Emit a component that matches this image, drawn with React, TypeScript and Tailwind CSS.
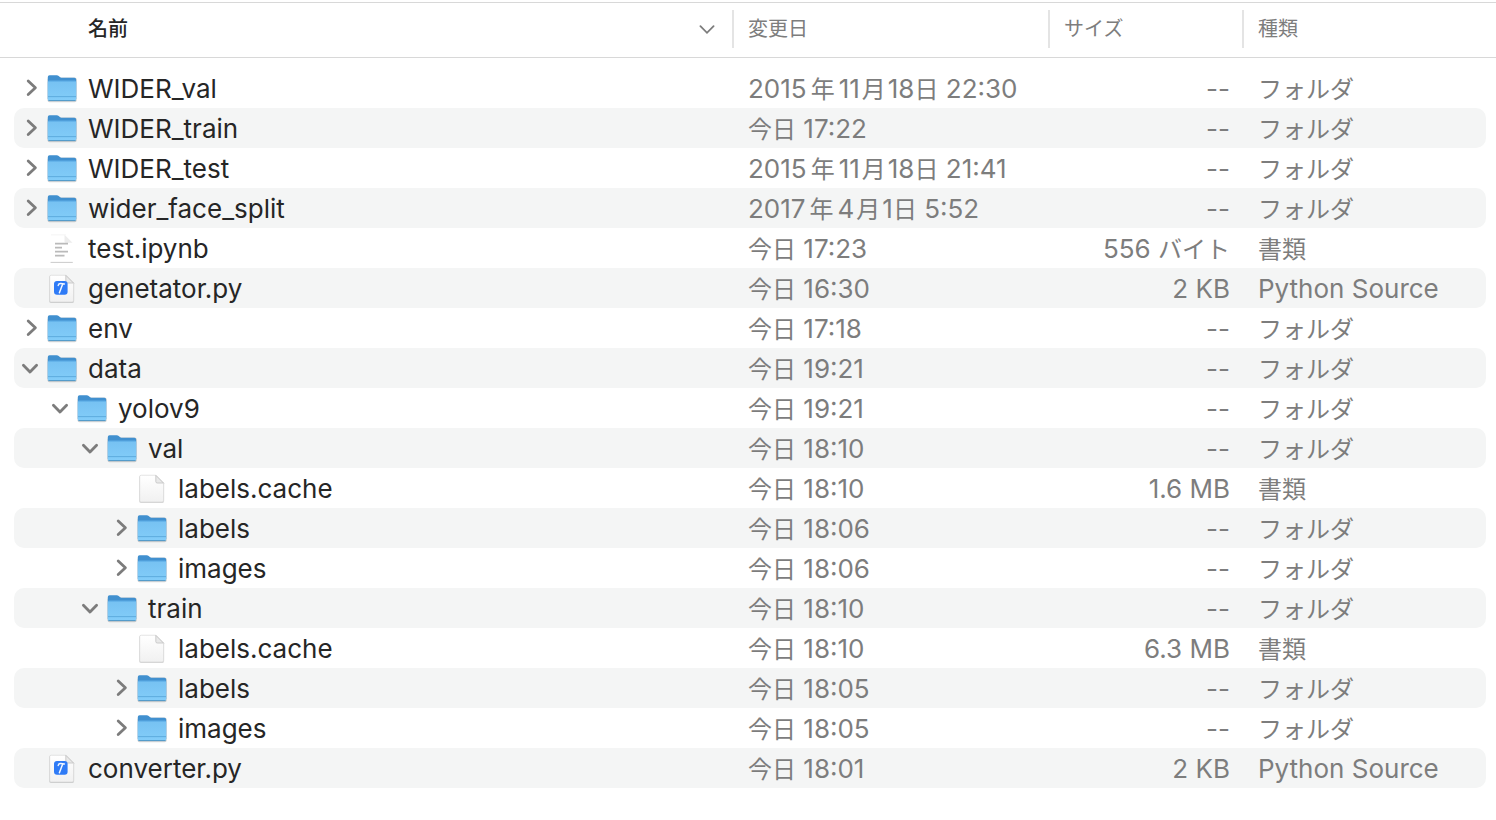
import { Fragment, useState } from "react";

type Kind = "folder" | "text" | "python" | "blank";

type Entry = {
  id: string;
  name: string;
  icon: Kind;
  date: string;
  size: string;
  type: string;
  children?: Entry[];
};

const folder = (id: string, name: string, date: string, children: Entry[] = []): Entry => ({
  id,
  name,
  icon: "folder",
  date,
  size: "--",
  type: "フォルダ",
  children,
});

const file = (id: string, name: string, icon: Kind, date: string, size: string, type: string): Entry => ({
  id,
  name,
  icon,
  date,
  size,
  type,
});

const entries: Entry[] = [
  folder("wval", "WIDER_val", "2015年11月18日 22:30"),
  folder("wtrain", "WIDER_train", "今日 17:22"),
  folder("wtest", "WIDER_test", "2015年11月18日 21:41"),
  folder("split", "wider_face_split", "2017年4月1日 5:52"),
  file("test", "test.ipynb", "text", "今日 17:23", "556 バイト", "書類"),
  file("gen", "genetator.py", "python", "今日 16:30", "2 KB", "Python Source"),
  folder("env", "env", "今日 17:18"),
  folder("data", "data", "今日 19:21", [
    folder("yolo", "yolov9", "今日 19:21", [
      folder("val", "val", "今日 18:10", [
        file("vcache", "labels.cache", "blank", "今日 18:10", "1.6 MB", "書類"),
        folder("vlabels", "labels", "今日 18:06"),
        folder("vimages", "images", "今日 18:06"),
      ]),
      folder("train", "train", "今日 18:10", [
        file("tcache", "labels.cache", "blank", "今日 18:10", "6.3 MB", "書類"),
        folder("tlabels", "labels", "今日 18:05"),
        folder("timages", "images", "今日 18:05"),
      ]),
    ]),
  ]),
  file("conv", "converter.py", "python", "今日 18:01", "2 KB", "Python Source"),
];

const indents = ["pl-0", "pl-[30px]", "pl-[60px]", "pl-[90px]"];

function FolderIcon() {
  return (
    <svg width="30" height="32" viewBox="0 -1 30 32" aria-hidden="true" className="block shrink-0">
      <defs>
        <linearGradient id="folderFront" x1="0" y1="0" x2="0" y2="1">
          <stop offset="0" stopColor="#76c1f2" />
          <stop offset="1" stopColor="#83cdf9" />
        </linearGradient>
      </defs>
      <rect x="0.5" y="4.6" width="29.2" height="24.6" rx="2" fill="#000" opacity="0.16" />
      <path d="M0.8 4q0-1.8 1.8-1.8h7.2q1.1 0 1.9.7l1.5 1.3q.8.6 1.9.6h12.2q1.9 0 1.9 1.8V26H.8Z" fill="#4190cf" />
      <path d="M0.8 9q0-1.3 1.4-1.3h25.6q1.4 0 1.4 1.3v17.2q0 1.6-1.6 1.6H2.4q-1.6 0-1.6-1.6Z" fill="url(#folderFront)" />
      <path d="M1 8.3h28" stroke="#5cace6" strokeWidth="0.8" />
      <path d="M1 23.6h28" stroke="#5aa9db" strokeWidth="0.9" />
      <path d="M1.4 27.6h27.2" stroke="#4f97c6" strokeWidth="1" />
    </svg>
  );
}

function Sheet() {
  return (
    <>
      <path d="M4 2.6h15.5l7.6 7.6v17.9q0 1.9-1.6 1.9H4q-1.9 0-1.9-1.9V4.2q0-1.6 1.9-1.6Z" fill="#000" opacity="0.16" />
      <path d="M4.2 2.2h14.6l7.8 7.8v17.4q0 1.5-1.5 1.5H4.2q-1.5 0-1.5-1.5V3.7q0-1.5 1.5-1.5Z" fill="url(#sheetFill)" stroke="#d6d6d6" strokeWidth="0.6" />
      <path d="M18.8 2.4v6.2q0 1.4 1.4 1.4h6.2Z" fill="#e9e9e9" stroke="#c2c2c2" strokeWidth="0.8" />
    </>
  );
}

function FileIcon({ kind }: { kind: Kind }) {
  if (kind === "folder") return <FolderIcon />;
  if (kind === "text") {
    return (
      <svg width="30" height="32" viewBox="0 -1 30 32" aria-hidden="true" className="block shrink-0">
        <path d="M4 1.6h14.8l6.6 6.6v21H4Z" fill="#fff" />
        <path d="M4 1.8h14.8" stroke="#f1f1f1" strokeWidth="0.8" />
        <path d="M17.5 1.8 25.5 9.8H19q-1.5 0-1.5-1.5Z" fill="#ededed" />
        <path d="M8 10.6h13M8 14.6h7M8 18.6h13M8 22.6h9.5" stroke="#bababa" strokeWidth="1.7" />
        <path d="M3.6 29.4h22.2" stroke="#c4c4c4" strokeWidth="0.9" />
      </svg>
    );
  }
  return (
    <svg width="30" height="32" viewBox="0 -1 30 32" aria-hidden="true" className="block shrink-0">
      <defs>
        <linearGradient id="sheetFill" x1="0" y1="0" x2="0" y2="1">
          <stop offset="0" stopColor="#ffffff" />
          <stop offset="1" stopColor="#f1f1f1" />
        </linearGradient>
      </defs>
      <Sheet />
      {kind === "python" && (
        <>
          <rect x="7" y="8" width="13.6" height="13.8" rx="3" fill="#2f7bf6" />
          <path
            d="M11.2 12.4q.5-1.9 2.6-1.8l3.6.4M15.6 11.2 12.4 19.8"
            fill="none"
            stroke="#f2f7ff"
            strokeWidth="1.5"
            strokeLinecap="round"
          />
        </>
      )}
    </svg>
  );
}

function Chevron({ open }: { open: boolean }) {
  return (
    <svg width="33" height="40" viewBox="0 0 33 40" aria-hidden="true" className="block">
      <path
        d={open ? "M9.4 17.2 16 24l6.6-6.8" : "M14.2 13 21.4 19.8 14.2 26.6"}
        fill="none"
        stroke="#7c7c7c"
        strokeWidth="2.8"
        strokeLinecap="round"
        strokeLinejoin="round"
      />
    </svg>
  );
}

const runGap = (run: string) => {
  if (run === "年") return "mx-1 text-[24px]";
  if (run === "月") return "mx-0.5 text-[24px]";
  return "text-[24px]";
};

/* Japanese runs are set one step smaller than Latin ones. */
function Mixed({ text }: { text: string }) {
  const runs = text.split(/([\u3040-\u30ff\u4e00-\u9fff]+)/).filter(Boolean);
  return (
    <>
      {runs.map((run, i) =>
        /[\u3040-\u30ff\u4e00-\u9fff]/.test(run) ? (
          <span key={i} className={runGap(run)}>
            {run}
          </span>
        ) : (
          <Fragment key={i}>{run}</Fragment>
        ),
      )}
    </>
  );
}

export default function App() {
  const [open, setOpen] = useState<string[]>(["data", "yolo", "val", "train"]);

  const toggle = (id: string) =>
    setOpen((ids) => (ids.includes(id) ? ids.filter((x) => x !== id) : [...ids, id]));

  const flatten = (list: Entry[], depth: number): { entry: Entry; depth: number }[] =>
    list.flatMap((entry) => [
      { entry, depth },
      ...(entry.children && open.includes(entry.id) ? flatten(entry.children, depth + 1) : []),
    ]);

  return (
    <main className="min-h-screen bg-white pt-[2px] font-['Inter','Noto_Sans_CJK_JP',sans-serif] text-[26px] text-[#7d7d7d]">
      <table className="w-full table-fixed border-collapse">
        <colgroup>
          <col />
          <col className="w-[316px]" />
          <col className="w-[194px]" />
          <col className="w-[254px]" />
        </colgroup>
        <thead className="border-y border-[#d8d8d8] text-left text-[20px] leading-[38px]">
          <tr>
            <th scope="col" className="pt-[7px] pb-[9px] pl-[88px] font-medium text-[#262626]">
              <button type="button" className="flex h-[38px] w-full items-start justify-between pr-4">
                名前
                <svg width="18" height="38" viewBox="0 0 18 38" aria-hidden="true">
                  <path d="m2.4 16.2 6.6 6.6 6.6-6.6" fill="none" stroke="#7c7c7c" strokeWidth="1.8" strokeLinecap="round" />
                </svg>
              </button>
            </th>
            {["変更日", "サイズ", "種類"].map((label) => (
              <th key={label} scope="col" className="pt-[7px] pb-[9px] font-normal">
                <button
                  type="button"
                  className="flex h-[38px] w-full items-start border-l-2 border-[#e4e4e4] pl-[14px] text-left"
                >
                  {label}
                </button>
              </th>
            ))}
          </tr>
        </thead>
        <tbody className="before:block before:h-[10px]">
          {flatten(entries, 0).map(({ entry, depth }, i) => {
            const stripe = i % 2 === 1 ? "bg-[#f4f5f5]" : "";
            const isOpen = open.includes(entry.id);
            return (
              <tr key={entry.id} className="leading-[42px] whitespace-nowrap">
                <td className="p-0 pl-[14px]">
                  <div className={`h-10 rounded-l-[10px] ${stripe}`}>
                    <div className={`flex h-10 items-start ${indents[depth]}`}>
                      {entry.children ? (
                        <button
                          type="button"
                          aria-expanded={isOpen}
                          aria-label={entry.name}
                          onClick={() => toggle(entry.id)}
                          className="w-[33px] shrink-0"
                        >
                          <Chevron open={isOpen} />
                        </button>
                      ) : (
                        <span className="w-[33px] shrink-0" />
                      )}
                      <span className="pt-1">
                        <FileIcon kind={entry.icon} />
                      </span>
                      <span className="pl-[11px] text-[#262626]">{entry.name}</span>
                    </div>
                  </div>
                </td>
                <td className="p-0">
                  <div className={`h-10 pl-4 ${stripe}`}>
                    <Mixed text={entry.date} />
                  </div>
                </td>
                <td className="p-0">
                  <div className={`h-10 pr-3 text-right ${stripe}`}>
                    <Mixed text={entry.size} />
                  </div>
                </td>
                <td className="p-0 pr-[10px]">
                  <div className={`h-10 rounded-r-[10px] pl-4 ${stripe}`}>
                    <Mixed text={entry.type} />
                  </div>
                </td>
              </tr>
            );
          })}
        </tbody>
      </table>
    </main>
  );
}
